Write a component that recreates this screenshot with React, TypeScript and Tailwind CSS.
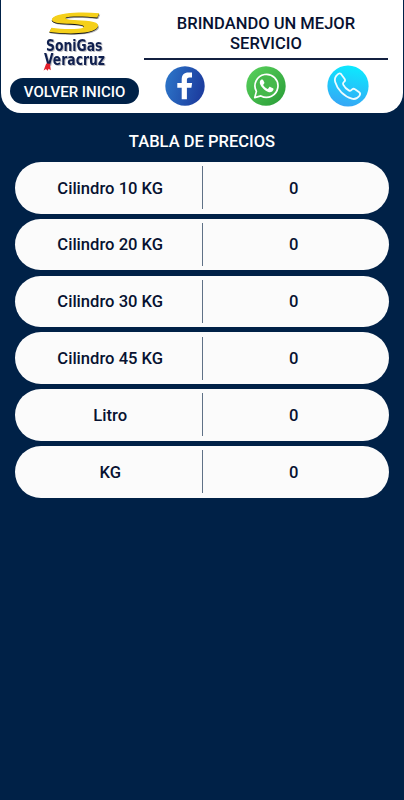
import React from "react";

const prices = [
  { name: "Cilindro 10 KG", price: "0" },
  { name: "Cilindro 20 KG", price: "0" },
  { name: "Cilindro 30 KG", price: "0" },
  { name: "Cilindro 45 KG", price: "0" },
  { name: "Litro", price: "0" },
  { name: "KG", price: "0" },
];

const sPath =
  "M99.3 13.2C88 12.2 76 12.2 66 13.4C54 14.8 48.5 19.3 54 22C59 24.2 74 23.4 81.5 24.9C86 26.2 84 28.2 78 28.7C70 29.4 59 28.9 51.5 27.7L49.3 32C60 33.6 76 33.9 85 32.6C97 31 101 25.9 96 22.8C91 20 73 20.6 67.5 19.2C64 18.1 65.5 17 70 16.7C79 16.2 89 16.7 97.3 17.6Z";

function Logo() {
  return (
    <svg className="h-[66px] w-[80px]" viewBox="35 8 80 66" role="img" aria-label="SoniGas Veracruz">
      <path d={sPath} fill="#77777c" opacity=".55" transform="translate(1 1.5)" />
      <path d={sPath} fill="#151515" transform="translate(-.1 .8)" />
      <path d={sPath} fill="#f5d01a" />
      <g className="drop-shadow-[1px_1px_0.5px_#8888928c]" fill="#10204f" fontFamily="'DejaVu Sans', sans-serif" fontWeight="700" fontSize="15">
        <text x="46" y="50.8" textLength="56.5" lengthAdjust="spacingAndGlyphs">SoniGas</text>
        <text x="44" y="65.3" textLength="61" lengthAdjust="spacingAndGlyphs">Veracruz</text>
      </g>
      <path d="M46.2 63.6L50 63.8L50.8 70.2L48.6 68.8L47.6 70.8L46 69L43.6 70.4Z" fill="#e3202c" />
    </svg>
  );
}

function FacebookIcon() {
  return (
    <svg className="size-10" viewBox="0 0 40 40" aria-label="Facebook">
      <defs>
        <linearGradient id="fb" x1="0" y1="0" x2="1" y2="0.25">
          <stop offset="0" stopColor="#2d78cb" />
          <stop offset="1" stopColor="#1d3fa0" />
        </linearGradient>
      </defs>
      <circle cx="20" cy="20" r="19.7" fill="url(#fb)" />
      <path d="M16.7 33.2V21.8H12.3V16.9H16.7V13.4C16.7 9 19 6.4 23.6 6.4H27V11.4H24.5C22.5 11.4 21.9 12.3 21.9 13.9V16.9H27.1L26.4 21.8H21.9V33.2Z" fill="#fff" />
    </svg>
  );
}

function WhatsAppIcon() {
  return (
    <svg className="size-10" viewBox="0 0 40 40" aria-label="WhatsApp">
      <defs>
        <linearGradient id="wa" x1="0" y1="0" x2="1" y2="1">
          <stop offset="0" stopColor="#5bd35e" />
          <stop offset="1" stopColor="#289b36" />
        </linearGradient>
      </defs>
      <circle cx="20" cy="20" r="19.7" fill="url(#wa)" />
      <path d="M8.7 31.6L10.4 25.4A11.5 11.5 0 1 1 14.9 29.9Z" fill="#46b94c" stroke="#fff" strokeWidth="1.7" strokeLinejoin="round" />
      <g transform="translate(13.2 12.4) scale(.64)">
        <path d="M6.5 3.2C5.7 1.4 4.8 1.5 3.8 1.6C2.5 2 .8 4 .9 6.6C1 11 7.6 19.6 15.3 21.5C18.6 22.3 21.7 19.8 22.2 17.8C22.5 16.2 22.3 15.8 21.5 15.4L17.3 13.4C16.6 13.1 16.1 13.2 15.6 13.9L13.9 16C13.5 16.5 13 16.5 12.4 16.2C9.8 15 7.8 13.2 6.4 10.8C6.1 10.2 6.2 9.8 6.6 9.4L8 7.7C8.3 7.3 8.3 6.9 8.1 6.5Z" fill="#fff" />
      </g>
    </svg>
  );
}

function PhoneIcon() {
  return (
    <svg className="size-[42px]" viewBox="0 0 42 42" aria-label="Teléfono">
      <defs>
        <linearGradient id="tel" x1=".6" y1="0" x2=".4" y2="1">
          <stop offset="0" stopColor="#0ceaff" />
          <stop offset="1" stopColor="#36a6f5" />
        </linearGradient>
      </defs>
      <circle cx="21" cy="21" r="20.6" fill="url(#tel)" />
      <path d="M13.8 8.8C12.8 8 11.6 8.4 10.4 9.6C8 11.7 7.4 14.2 8.2 17C10.4 24.7 17 31.5 24.8 33.7C28 34.6 30.6 33.2 32.5 30.7C33.5 29.3 33.5 28.3 32.2 27.3L28 24.3C26.8 23.4 25.6 23.6 24.7 24.8C23.9 25.9 23.2 26.2 21.8 25.4C19.3 24 17.5 22.1 16.2 19.6C15.6 18.4 15.8 17.8 17 16.9C18.2 16 18.4 15 17.5 13.7Z" fill="none" stroke="#effcff" strokeWidth="1.8" strokeLinejoin="round" />
    </svg>
  );
}

export default function App() {
  return (
    <main className="h-[800px] w-full overflow-hidden bg-[#002147] font-[Roboto,sans-serif] font-medium text-[#071231]">
      <header className="ml-px mr-px flex h-[113px] rounded-b-[20px] bg-white">
        <div className="flex w-[142px] flex-col pl-[9.4px] pt-2">
          <div className="pl-[24.6px]"><Logo /></div>
          <button className="mt-1 h-[26px] w-[128.4px] shrink-0 rounded-full bg-[#002147] pt-[2px] text-[15px] font-medium leading-[24px] text-white">
            VOLVER INICIO
          </button>
        </div>
        <div className="w-[246px] pt-3.5">
          <h1 className="text-center text-[16.55px] leading-[19.5px]">BRINDANDO UN MEJOR<br />SERVICIO</h1>
          <div className="mt-[5px] ml-px h-[2px] w-[244px] bg-[#132040]" />
          <nav className="mt-[5px] flex items-center justify-between pl-[22px] pr-[20.4px]">
            <FacebookIcon />
            <WhatsAppIcon />
            <PhoneIcon />
          </nav>
        </div>
      </header>
      <section>
        <h2 className="pt-[19px] text-center text-[16.55px] leading-5 text-white">TABLA DE PRECIOS</h2>
        <ul className="mt-[10px] ml-[15px] flex w-[374px] flex-col gap-[5.1px]">
          {prices.map((item) => (
            <li key={item.name} className="flex h-[51.7px] items-center rounded-[26px] bg-[#fbfbfb] px-1 text-[16.6px]">
              <span className="flex-1 pt-[2.4px] text-center">{item.name}</span>
              <span className="h-[43px] w-px bg-[#5f7186]" />
              <span className="flex-1 pt-[2.4px] text-center">{item.price}</span>
            </li>
          ))}
        </ul>
      </section>
    </main>
  );
}
